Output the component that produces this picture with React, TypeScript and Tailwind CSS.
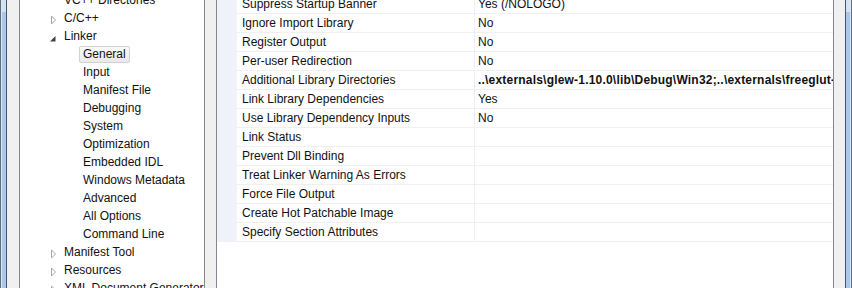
const treeItems: { label: string; level: 0 | 1; state?: "closed" | "open"; selected?: boolean }[] = [
  { label: "VC++ Directories", level: 0 },
  { label: "C/C++", level: 0, state: "closed" },
  { label: "Linker", level: 0, state: "open" },
  { label: "General", level: 1, selected: true },
  { label: "Input", level: 1 },
  { label: "Manifest File", level: 1 },
  { label: "Debugging", level: 1 },
  { label: "System", level: 1 },
  { label: "Optimization", level: 1 },
  { label: "Embedded IDL", level: 1 },
  { label: "Windows Metadata", level: 1 },
  { label: "Advanced", level: 1 },
  { label: "All Options", level: 1 },
  { label: "Command Line", level: 1 },
  { label: "Manifest Tool", level: 0, state: "closed" },
  { label: "Resources", level: 0, state: "closed" },
  { label: "XML Document Generator", level: 0, state: "closed" },
];

const properties: { name: string; value?: string; bold?: boolean }[] = [
  { name: "Suppress Startup Banner", value: "Yes (/NOLOGO)" },
  { name: "Ignore Import Library", value: "No" },
  { name: "Register Output", value: "No" },
  { name: "Per-user Redirection", value: "No" },
  {
    name: "Additional Library Directories",
    value:
      "..\\externals\\glew-1.10.0\\lib\\Debug\\Win32;..\\externals\\freeglut-2.8.1\\lib\\Debug;%(AdditionalLibraryDirectories)",
    bold: true,
  },
  { name: "Link Library Dependencies", value: "Yes" },
  { name: "Use Library Dependency Inputs", value: "No" },
  { name: "Link Status" },
  { name: "Prevent Dll Binding" },
  { name: "Treat Linker Warning As Errors" },
  { name: "Force File Output" },
  { name: "Create Hot Patchable Image" },
  { name: "Specify Section Attributes" },
];

function Expander({ state }: { state?: "closed" | "open" }) {
  return (
    <svg width="16" height="18" viewBox="0 0 16 18" className="shrink-0">
      {state === "closed" && (
        <polygon points="3.5,7 3.5,15 7.5,11" fill="#fff" stroke="#a6a6a6" strokeWidth="1" />
      )}
      {state === "open" && <polygon points="7.5,9 7.5,14.5 2,14.5" fill="#404040" />}
    </svg>
  );
}

function FrameEdge({ side }: { side: "left" | "right" }) {
  const glass = (
    <div className="flex w-[4px] flex-col">
      <div className="h-[12px] bg-[#d3e1f1]" />
      <div className="flex-1 bg-[#a9c8ec]" />
    </div>
  );
  return side === "left" ? (
    <div className="flex w-[7px] shrink-0">
      <div className="w-px bg-[#5f6d7e]" />
      <div className="w-px bg-[#dde7f3]" />
      {glass}
      <div className="w-px bg-[#44546a]" />
    </div>
  ) : (
    <div className="flex w-[7px] shrink-0">
      <div className="w-px bg-[#44546a]" />
      {glass}
      <div className="w-px bg-[#dde7f3]" />
      <div className="w-px bg-[#5f6d7e]" />
    </div>
  );
}

export default function App() {
  return (
    <div className="flex h-[288px] w-[852px] overflow-hidden bg-[#f0f0f0] font-['Liberation_Sans',Arial,sans-serif] text-[12px] text-[#111]">
      <FrameEdge side="left" />
      <div className="w-[12px] shrink-0" />

      {/* category tree */}
      <div className="w-[186px] shrink-0 overflow-hidden border-x border-[#828790] bg-white">
        <ul className="-mt-[9px]">
          {treeItems.map((item) => (
            <li key={item.label} className="flex h-[18px] items-center whitespace-nowrap">
              {item.level === 0 ? (
                <div className="flex items-center pl-[28px]">
                  <Expander state={item.state} />
                  <span className="leading-[18px]">{item.label}</span>
                </div>
              ) : (
                <div className="pl-[59px]">
                  <span
                    className={
                      item.selected
                        ? "block h-[17px] rounded-[2px] border border-[#d2d2d2] bg-gradient-to-b from-[#fbfbfb] to-[#e9e9e9] px-[3px] leading-[15px]"
                        : "block h-[17px] border border-transparent px-[3px] leading-[15px]"
                    }
                  >
                    {item.label}
                  </span>
                </div>
              )}
            </li>
          ))}
        </ul>
      </div>

      <div className="w-[11px] shrink-0" />

      {/* property grid */}
      <div className="w-[618px] shrink-0 overflow-hidden border-x border-[#828790] bg-white">
        <div className="-mt-[5px]">
          {properties.map((p) => (
            <div key={p.name} className="flex h-[19px]">
              <div className="w-[20px] shrink-0 bg-[#eff3f9]" />
              <div className="flex w-[238px] shrink-0 items-center border-r border-b border-r-[#eceff5] border-b-[#f0f0f0] pl-[5px] whitespace-nowrap">
                {p.name}
              </div>
              <div
                className={
                  "flex min-w-0 flex-1 items-center overflow-hidden border-b border-[#f0f0f0] pl-[3px] whitespace-nowrap" +
                  (p.bold ? " font-bold tracking-[0.2px]" : "")
                }
              >
                {p.value}
              </div>
            </div>
          ))}
        </div>
      </div>

      <div className="w-[11px] shrink-0" />
      <FrameEdge side="right" />
    </div>
  );
}
